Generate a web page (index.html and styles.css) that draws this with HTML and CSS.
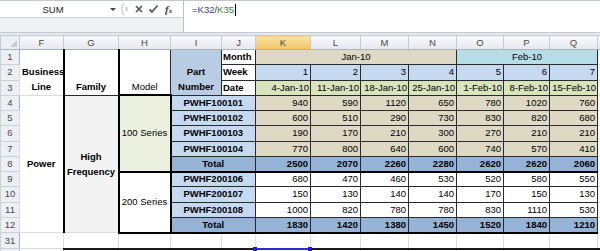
FILE: index.html
```html
<!DOCTYPE html>
<html>
<head>
<meta charset="utf-8">
<link rel="stylesheet" href="styles.css">
</head>
<body>
<div class="fbar">
  <div class="fleft">
    <div class="ftop">
      <div class="namebox"><span class="nbtext">SUM</span><span class="nbarrow"></span></div>
      <div class="fbtns">
        <svg class="split" width="12" height="16" viewBox="0 0 12 16"><path d="M6 1.5 Q1.5 8 6 14.5" fill="none" stroke="#c4c9cf" stroke-width="1.2"/><rect x="7" y="6.5" width="3" height="1" fill="#b0b6bd"/><rect x="7" y="8.5" width="3" height="1" fill="#b0b6bd"/></svg>
        <svg class="ico" width="10" height="10" viewBox="0 0 10 10"><path d="M2 2 L8 8 M8 2 L2 8" stroke="#555" stroke-width="1.7" fill="none"/></svg>
        <svg class="ico" width="11" height="10" viewBox="0 0 11 10"><path d="M1.5 5.5 L4 8 L9.5 1.5" stroke="#555" stroke-width="1.8" fill="none"/></svg>
        <span class="fx"><i>f</i><span class="fxx">x</span></span>
      </div>
    </div>
    <div class="fbottom"></div>
  </div>
  <div class="formula"><span>=</span><span class="r1">K32</span><span>/</span><span class="r2">K35</span><span class="caret"></span></div>
</div>
<div class="band"></div>
<table class="sheet">
  <colgroup>
    <col class="c-rh"><col class="c-f"><col class="c-g"><col class="c-h"><col class="c-i"><col class="c-j">
    <col class="c-k"><col class="c-l"><col class="c-m"><col class="c-n"><col class="c-o"><col class="c-p"><col class="c-q"><col class="c-r">
  </colgroup>
  <tr class="chrow">
    <td class="corner"><span class="tri"></span></td><td class="ch">F</td><td class="ch">G</td><td class="ch">H</td><td class="ch">I</td><td class="ch">J</td><td class="ch act">K</td><td class="ch">L</td><td class="ch">M</td><td class="ch">N</td><td class="ch">O</td><td class="ch">P</td><td class="ch">Q</td><td class="ch"></td>
  </tr>
  <tr class="r">
    <td class="rh">1</td>
    <td rowspan="3" class="bl bot thickR">Business Line</td>
    <td rowspan="3" class="bl bot thickR dkB">Family</td>
    <td rowspan="3" class="botn thickB dkR">Model</td>
    <td rowspan="3" class="bl bot dk blue2">Part Number</td>
    <td class="dk bl left">Month</td>
    <td colspan="4" class="dk tan">Jan-10</td>
    <td colspan="3" class="dk cyan">Feb-10</td>
    <td></td>
  </tr>
  <tr class="r">
    <td class="rh">2</td>
    <td class="dk bl left">Week</td>
    <td class="dk wk num">1</td><td class="dk wk num">2</td><td class="dk wk num">3</td><td class="dk wk num">4</td><td class="dk wk num">5</td><td class="dk wk num">6</td><td class="dk wk num">7</td>
    <td></td>
  </tr>
  <tr class="r">
    <td class="rh">3</td>
    <td class="dk bl left">Date</td>
    <td class="dk dt num">4-Jan-10</td><td class="dk dt num">11-Jan-10</td><td class="dk dt num">18-Jan-10</td><td class="dk dt num">25-Jan-10</td><td class="dk dt num">1-Feb-10</td><td class="dk dt num">8-Feb-10</td><td class="dk dt num">15-Feb-10</td>
    <td></td>
  </tr>
  <tr class="r">
    <td class="rh">4</td>
    <td rowspan="9" class="bl thickR">Power</td>
    <td rowspan="9" class="bl gray thickR dkT">High Frequency</td>
    <td rowspan="5" class="box s100">100 Series</td>
    <td colspan="2" class="dk bl part">PWHF100101</td>
    <td class="dk tan num">940</td><td class="dk tan num">590</td><td class="dk tan num">1120</td><td class="dk tan num">650</td><td class="dk tan num">780</td><td class="dk tan num">1020</td><td class="dk tan num">760</td>
    <td></td>
  </tr>
  <tr class="r">
    <td class="rh">5</td>
    <td colspan="2" class="dk bl part">PWHF100102</td>
    <td class="dk tan num">600</td><td class="dk tan num">510</td><td class="dk tan num">290</td><td class="dk tan num">730</td><td class="dk tan num">830</td><td class="dk tan num">820</td><td class="dk tan num">680</td>
    <td></td>
  </tr>
  <tr class="r">
    <td class="rh">6</td>
    <td colspan="2" class="dk bl part">PWHF100103</td>
    <td class="dk tan num">190</td><td class="dk tan num">170</td><td class="dk tan num">210</td><td class="dk tan num">300</td><td class="dk tan num">270</td><td class="dk tan num">210</td><td class="dk tan num">210</td>
    <td></td>
  </tr>
  <tr class="r">
    <td class="rh">7</td>
    <td colspan="2" class="dk bl part">PWHF100104</td>
    <td class="dk tan num">770</td><td class="dk tan num">800</td><td class="dk tan num">640</td><td class="dk tan num">600</td><td class="dk tan num">740</td><td class="dk tan num">570</td><td class="dk tan num">410</td>
    <td></td>
  </tr>
  <tr class="r">
    <td class="rh">8</td>
    <td colspan="2" class="dk bl tot thickB">Total</td>
    <td class="dk bl tot num thickB">2500</td><td class="dk bl tot num thickB">2070</td><td class="dk bl tot num thickB">2260</td><td class="dk bl tot num thickB">2280</td><td class="dk bl tot num thickB">2620</td><td class="dk bl tot num thickB">2620</td><td class="dk bl tot num thickB">2060</td>
    <td></td>
  </tr>
  <tr class="r">
    <td class="rh">9</td>
    <td rowspan="4" class="box">200 Series</td>
    <td colspan="2" class="dk bl part">PWHF200106</td>
    <td class="dk num">680</td><td class="dk num">470</td><td class="dk num">460</td><td class="dk num">530</td><td class="dk num">520</td><td class="dk num">580</td><td class="dk num">550</td>
    <td></td>
  </tr>
  <tr class="r">
    <td class="rh">10</td>
    <td colspan="2" class="dk bl part">PWHF200107</td>
    <td class="dk num">150</td><td class="dk num">130</td><td class="dk num">140</td><td class="dk num">140</td><td class="dk num">170</td><td class="dk num">150</td><td class="dk num">130</td>
    <td></td>
  </tr>
  <tr class="r">
    <td class="rh">11</td>
    <td colspan="2" class="dk bl part">PWHF200108</td>
    <td class="dk num">1000</td><td class="dk num">820</td><td class="dk num">780</td><td class="dk num">780</td><td class="dk num">830</td><td class="dk num">1110</td><td class="dk num">530</td>
    <td></td>
  </tr>
  <tr class="r">
    <td class="rh">12</td>
    <td colspan="2" class="dk bl tot thickB">Total</td>
    <td class="dk bl tot num thickB">1830</td><td class="dk bl tot num thickB">1420</td><td class="dk bl tot num thickB">1380</td><td class="dk bl tot num thickB">1450</td><td class="dk bl tot num thickB">1520</td><td class="dk bl tot num thickB">1840</td><td class="dk bl tot num thickB">1210</td>
    <td></td>
  </tr>
  <tr class="r31">
    <td class="rh">31</td>
    <td></td><td></td><td></td><td></td><td></td><td></td><td></td><td></td><td></td><td></td><td></td><td></td><td></td>
  </tr>
  <tr class="r32">
    <td class="rh"></td>
    <td></td><td class="tk"></td><td class="tk"></td><td class="tk"></td><td class="tk"></td><td class="tk ref"></td><td class="tk"></td><td class="tk"></td><td class="tk"></td><td class="tk"></td><td class="tk"></td><td class="tk"></td><td class="tk"></td>
  </tr>
</table>
</body>
</html>
```
FILE: styles.css
```css
html, body {
  margin: 0;
  padding: 0;
}
body {
  width: 600px;
  height: 251px;
  overflow: hidden;
  background: #ffffff;
  font-family: "Liberation Sans", Arial, sans-serif;
  font-size: 9.5px;
  color: #000;
}

/* formula bar */
.fbar {
  display: flex;
  height: 33px;
  box-sizing: border-box;
  border-top: 1px solid #c3c9d1;
  border-bottom: 1px solid #c3c9d1;
}
.fleft {
  width: 183px;
  display: flex;
  flex-direction: column;
}
.ftop {
  height: 16px;
  display: flex;
  align-items: center;
  background: #fff;
  border-bottom: 1px solid #cdd2d8;
}
.fbottom {
  flex: 1;
  background: #eff1f4;
}
.namebox {
  width: 117px;
  display: flex;
  align-items: center;
  height: 16px;
}
.nbtext {
  width: 106px;
  text-align: center;
  color: #222;
  font-size: 9.5px;
}
.nbarrow {
  width: 0;
  height: 0;
  border-left: 3px solid transparent;
  border-right: 3px solid transparent;
  border-top: 3px solid #444;
  margin-left: 4px;
}
.fbtns {
  flex: 1;
  display: flex;
  align-items: center;
  gap: 4px;
  height: 16px;
}
.split {
  margin-left: 1px;
}
.ico {
  display: block;
}
.fx {
  font-family: "Liberation Serif", serif;
  color: #444;
  font-size: 11px;
  margin-left: 2px;
}
.fx i {
  font-weight: bold;
}
.fxx {
  font-family: "Liberation Sans", sans-serif;
  font-size: 6px;
  font-weight: bold;
}
.formula {
  flex: 1;
  border-left: 1px solid #b9c0c9;
  background: #fff;
  padding-left: 8px;
  padding-top: 3px;
  font-size: 9.5px;
  line-height: 12px;
  color: #333;
  display: flex;
  align-items: flex-start;
}
.r1 { color: #3d3dbb; }
.r2 { color: #2e8a3a; }
.caret {
  display: inline-block;
  width: 1px;
  height: 12px;
  background: #000;
  margin-left: 1px;
}
.band {
  height: 2px;
  background: #e6e9ed;
}

/* sheet */
.sheet {
  border-collapse: collapse;
  table-layout: fixed;
  width: 620px;
}
.c-rh { width: 19px; }
.c-f { width: 44px; }
.c-g { width: 55px; }
.c-h { width: 52px; }
.c-i { width: 51px; }
.c-j { width: 34px; }
.c-k { width: 55px; }
.c-l { width: 50px; }
.c-m { width: 48px; }
.c-n { width: 48px; }
.c-o { width: 47px; }
.c-p { width: 46px; }
.c-q { width: 48px; }
.c-r { width: 23px; }

.sheet td {
  border: 1px solid #dadcdf;
  padding: 0 2px;
  text-align: center;
  vertical-align: middle;
  white-space: nowrap;
  overflow: hidden;
  line-height: 12px;
  box-sizing: border-box;
}
.chrow { height: 14px; }
.r { height: 15.25px; }
.r31 { height: 16px; }
.r32 { height: 10px; }

.sheet td.ch {
  background: linear-gradient(#f8f9fb, #e5e8ed);
  color: #4a4a4a;
  border: 1px solid #c6ccd3;
  border-bottom: 1px solid #a9b3be;
  font-size: 9.5px;
}
.sheet td.ch.act {
  background: linear-gradient(#fae3a8, #f3c662);
  border-bottom: 1px solid #e9a93a;
}
.sheet td.corner {
  background: #eceff3;
  border: 1px solid #c6ccd3;
  border-bottom: 1px solid #a9b3be;
  position: relative;
}
.tri {
  position: absolute;
  right: 2px;
  bottom: 2px;
  width: 0;
  height: 0;
  border-left: 7px solid transparent;
  border-bottom: 7px solid #c6ccd4;
}
.sheet td.rh {
  background: #eceff3;
  color: #4a4a4a;
  border: 1px solid #ccd1d8;
  border-right: 1px solid #a9b3be;
  padding: 0;
}

.sheet td.bl { font-weight: bold; }
.sheet td.left { text-align: left; padding-left: 1px; }
.sheet td.num { text-align: right; padding-right: 2px; }
.sheet td.bot {
  vertical-align: bottom;
  white-space: normal;
  line-height: 15.5px;
  padding-bottom: 0;
}
.sheet td.botn {
  vertical-align: bottom;
  line-height: 15.5px;
}
.sheet td.dk { border: 1px solid #2a2a2a; }
.sheet td.dkB { border-bottom: 1px solid #2a2a2a; }
.sheet td.dkR { border-right: 1px solid #2a2a2a; }
.sheet td.dkT { border-top: 1px solid #2a2a2a; }
.sheet td.thickR { border-right: 2px solid #000; }
.sheet td.thickB { border-bottom: 2px solid #000; }
.sheet td.box {
  border: 2px solid #000;
}
.sheet td.gray {
  background: #f3f3f3;
  white-space: normal;
  line-height: 14.5px;
  padding-top: 2px;
}
.sheet td.s100 { background: #ebf1de; }
.sheet td.blue2 { background: #b8cce4; }
.sheet td.tan { background: #ddd9c4; }
.sheet td.cyan { background: #b7dee8; }
.sheet td.wk { background: #c5d9f1; }
.sheet td.dt { background: #d8e4bc; padding-right: 1px; }
.sheet td.part { background: #c5d9f1; }
.sheet td.tot { background: #95b3d7; }

.sheet td.tk { border-top: 2px solid #1a1a1a; }
.sheet td.ref {
  border-top: 2px solid #2a2ad0;
  position: relative;
  overflow: visible;
}
.sheet td.ref::before,
.sheet td.ref::after {
  content: "";
  position: absolute;
  top: -3px;
  width: 4px;
  height: 4px;
  background: #1a1ad8;
}
.sheet td.ref::before { left: -3px; }
.sheet td.ref::after { right: -2px; }
```
